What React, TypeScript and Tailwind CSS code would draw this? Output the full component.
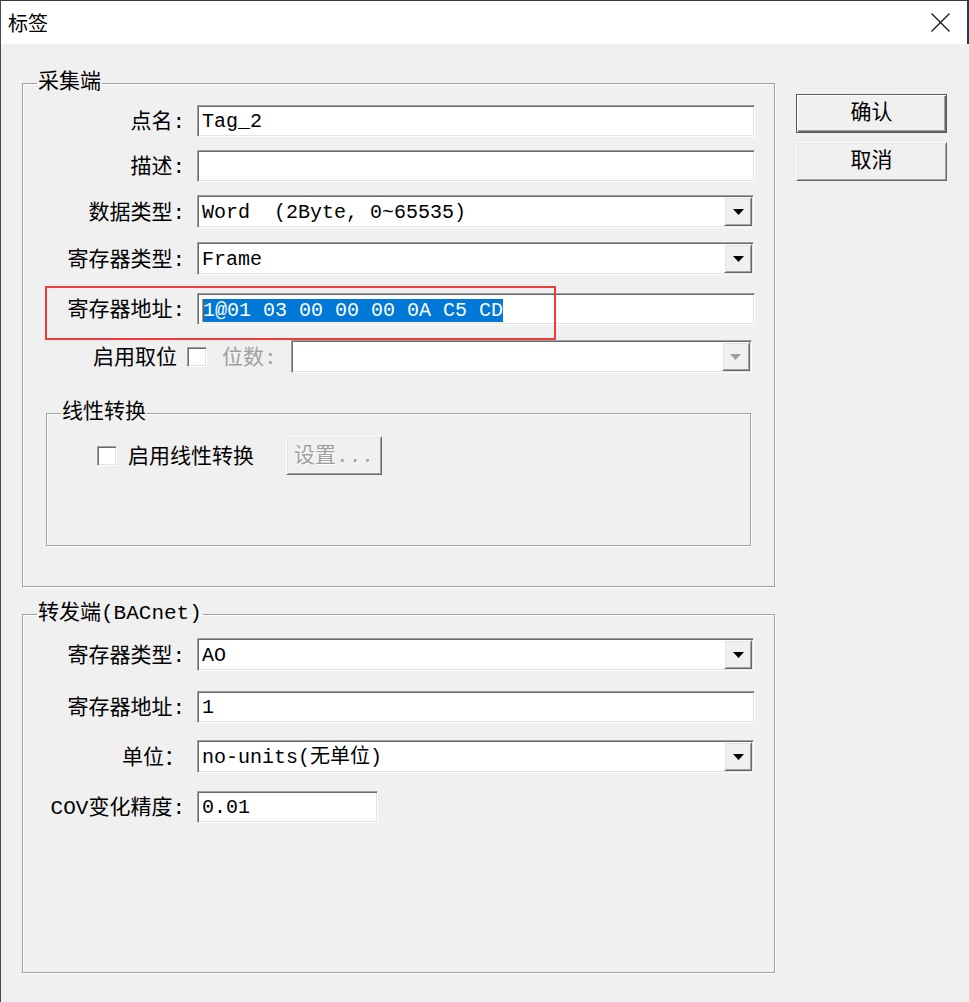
import type { ReactNode } from "react";

const sunken =
  "border border-t-[#a0a0a0] border-l-[#a0a0a0] border-b-white border-r-white bg-white shadow-[inset_1px_1px_0_#696969,inset_-1px_-1px_0_#e3e3e3]";
const raised =
  "border border-t-white border-l-white border-b-[#696969] border-r-[#696969] bg-[#f0f0f0] shadow-[inset_1px_1px_0_#e3e3e3,inset_-1px_-1px_0_#a0a0a0]";

const Group = ({ title, className, children }: { title: string; className: string; children?: ReactNode }) => (
  <fieldset className={`border border-[#a0a0a0] shadow-[1px_1px_0_#ffffff,inset_1px_1px_0_#ffffff] ${className}`}>
    <legend className="ml-[14px] px-[1px] text-[21px] leading-[24px]">{title}</legend>
    {children}
  </fieldset>
);

const Input = ({ value, w, h, children }: { value?: string; w: string; h: string; children?: ReactNode }) => (
  <div className={`${sunken} ${w} ${h} flex items-center pl-[4px] pt-[2px] text-[20px] leading-[24px] whitespace-pre`}>
    {children ?? value}
  </div>
);

const Arrow = ({ disabled }: { disabled?: boolean }) => (
  <div className={`${raised} w-[28px] h-full flex items-center justify-center`}>
    <svg width="11" height="6" viewBox="0 0 11 6">
      <path d="M0 0h11L5.5 6z" fill={disabled ? "#a0a0a0" : "#000"} />
    </svg>
  </div>
);

const Combo = ({ value, w, disabled }: { value?: string; w: string; disabled?: boolean }) => (
  <div className={`${sunken} ${w} h-[33px] flex items-stretch p-[1px] ${disabled ? "bg-[#f7f7f7]" : ""}`}>
    <div className="flex-1 flex items-center pl-[3px] pt-[2px] text-[20px] leading-[24px] whitespace-pre">{value}</div>
    <Arrow disabled={disabled} />
  </div>
);

const Row = ({ label, mt, children }: { label: string; mt: string; children: ReactNode }) => (
  <div className={`flex items-center ${mt}`}>
    <div className="w-[162px] pt-[3px] text-right text-[21px] leading-[25px] whitespace-pre">{label}</div>
    <div className="ml-[12px]">{children}</div>
  </div>
);

const Check = () => <div className={`${sunken} w-[20px] h-[20px]`} />;

export default function App() {
  return (
    <div className="relative w-[969px] h-[1002px] bg-[#f0f0f0] border-l border-[#4a4a4a] text-black font-['Liberation_Mono','Noto_Sans_CJK_SC',monospace] overflow-hidden">
      <div className="h-[44px] bg-white border-t border-r-2 border-t-[#3c3c3c] border-r-[#2e3a4a] flex items-center justify-between pl-[7px] pr-[17px]">
        <span className="text-[20px] font-['Noto_Sans_CJK_SC',sans-serif]">标签</span>
        <svg width="19" height="19" viewBox="0 0 19 19">
          <path d="M0.5 0.5L18.5 18.5M18.5 0.5L0.5 18.5" stroke="#111" strokeWidth="1.2" />
        </svg>
      </div>

      <div className="flex pl-[21px]">
        <div className="flex flex-col">
          <Group title="采集端" className="mt-[27px] w-[753px] h-[516px]">
            <Row label="点名:" mt="mt-[10px]">
              <Input value="Tag_2" w="w-[558px]" h="h-[32px]" />
            </Row>
            <Row label="描述:" mt="mt-[13px]">
              <Input w="w-[558px]" h="h-[32px]" />
            </Row>
            <Row label="数据类型:" mt="mt-[13px]">
              <Combo value="Word  (2Byte, 0~65535)" w="w-[557px]" />
            </Row>
            <Row label="寄存器类型:" mt="mt-[14px]">
              <Combo value="Frame" w="w-[557px]" />
            </Row>
            <Row label="寄存器地址:" mt="mt-[18px]">
              <Input w="w-[558px]" h="h-[32px]">
                <span className="border-l border-[#ff8a00] bg-[#0078d7] text-white leading-[23px]">1@01 03 00 00 00 0A C5 CD</span>
              </Input>
            </Row>
            <div className="flex items-center mt-[15px]">
              <div className="w-[154px] pt-[3px] text-right text-[21px] leading-[25px]">启用取位</div>
              <div className="ml-[10px]">
                <Check />
              </div>
              <div className="ml-[15px] pt-[3px] text-[21px] leading-[25px] text-[#a0a0a0]">位数:</div>
              <div className="ml-[14px]">
                <Combo w="w-[461px]" disabled />
              </div>
            </div>

            <Group title="线性转换" className="mt-[28px] ml-[23px] w-[705px] h-[145px]">
              <div className="flex items-center mt-[11px] h-[39px]">
                <div className="ml-[50px]">
                  <Check />
                </div>
                <div className="ml-[11px] pt-[3px] text-[21px] leading-[25px]">启用线性转换</div>
                <div className={`${raised} ml-[32px] w-[96px] h-[39px] flex items-center justify-center pt-[2px] text-[21px] leading-[25px] text-[#a0a0a0] [text-shadow:1px_1px_0_#fff]`}>
                  设置...
                </div>
              </div>
            </Group>
          </Group>

          <Group title="转发端(BACnet)" className="mt-[15px] w-[753px] h-[371px]">
            <Row label="寄存器类型:" mt="mt-[12px]">
              <Combo value="AO" w="w-[557px]" />
            </Row>
            <Row label="寄存器地址:" mt="mt-[20px]">
              <Input value="1" w="w-[558px]" h="h-[32px]" />
            </Row>
            <Row label="单位：" mt="mt-[17px]">
              <Combo value="no-units(无单位)" w="w-[557px]" />
            </Row>
            <Row label="COV变化精度:" mt="mt-[18px]">
              <Input value="0.01" w="w-[181px]" h="h-[32px]" />
            </Row>
          </Group>
        </div>

        <div className="ml-[21px] flex flex-col">
          <div className="mt-[50px] w-[151px] h-[39px] border border-[#5a5a5a] bg-[#f0f0f0] shadow-[inset_1px_1px_0_#ffffff,inset_-1px_-1px_0_#696969,inset_-2px_-2px_0_#a0a0a0] flex items-center justify-center text-[21px]">
            确认
          </div>
          <div className={`${raised} mt-[9px] w-[151px] h-[39px] flex items-center justify-center text-[21px]`}>
            取消
          </div>
        </div>
      </div>

      <div className="absolute left-[44px] top-[286px] w-[511px] h-[54px] border-2 border-[#ee3b3b]" />
    </div>
  );
}
